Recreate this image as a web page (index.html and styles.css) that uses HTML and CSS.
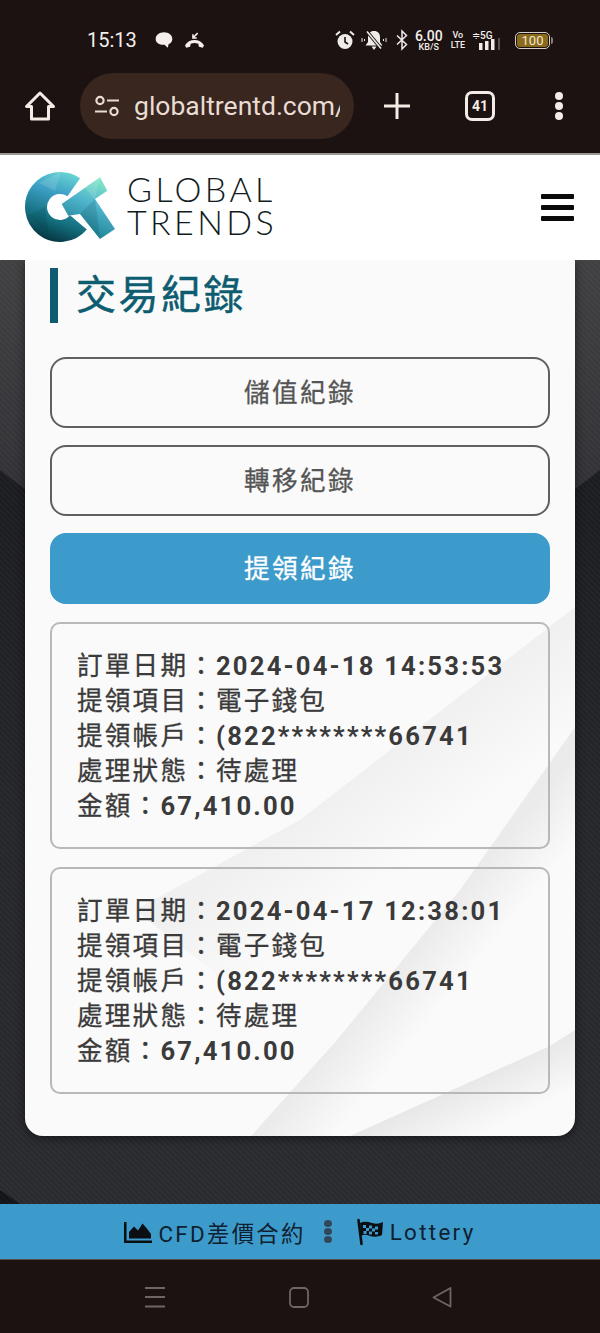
FILE: index.html
```html
<!DOCTYPE html>
<html lang="zh-Hant">
<head>
    <meta charset="UTF-8">
    <meta name="viewport" content="width=device-width, initial-scale=1.0">
    <title>交易紀錄</title>
    <link rel="stylesheet" href="styles.css">
</head>
<body>
<div class="phone">

    <!-- android status bar -->
    <div class="status-bar">
        <div class="status-left">
            <span class="clock">15:13</span>
            <svg width="20" height="20" viewBox="0 0 18 18"><path fill="#f4efec" d="M9 2c4.200 0 7.500 2.500 7.500 6 0 2.300-1.500 3.900-3.300 4.700l-.8 3.300-2.900-2.800C5 13.500 1.500 11.500 1.500 8c0-3.500 3.300-6 7.500-6z"/></svg>
            <svg width="21" height="19" viewBox="0 0 20 18"><path fill="#f4efec" d="M1 13.500c2-3.500 5.200-5 9-5s7 1.500 9 5l-1 2.300-3.800-.8-.6-3c-2.800-.8-4.400-.8-7.200 0l-.6 3-3.800.8z"/><path fill="none" stroke="#f4efec" stroke-width="1.500" d="M13 2L8.600 6.400M8.500 3v3.600h3.600"/></svg>
        </div>
        <div class="status-right">
            <svg width="22" height="22" viewBox="0 0 22 22"><circle cx="11" cy="12.500" r="7.500" fill="#f0ebe8"/><path d="M11 8v5l3 2" fill="none" stroke="#1c1211" stroke-width="1.600"/><path d="M2 6l4-3.500M20 6l-4-3.500" stroke="#f0ebe8" stroke-width="2"/></svg>
            <svg width="26" height="22" viewBox="0 0 26 22"><path fill="#f0ebe8" d="M13 2c4 0 6 2.500 6 6.500V13l2.500 3.500h-17L7 13V8.500C7 4.500 9 2 13 2zM10.500 17.500h5L13 21z"/><path d="M6 2.500l14 17" stroke="#1c1211" stroke-width="3.500"/><path d="M6 2.500l14 17" stroke="#f0ebe8" stroke-width="1.600"/><path d="M1 9v4M3.500 10v2M25 9v4M22.500 10v2" stroke="#f0ebe8"/></svg>
            <svg class="bt-icon" width="14" height="22" viewBox="0 0 14 22"><path fill="none" stroke="#f0ebe8" stroke-width="1.500" d="M2 6.500l9.500 9L7 20V2l4.500 4.500L2 15.500"/></svg>
            <div class="speed"><span class="speed-num">6.00</span><span class="speed-unit">KB/S</span></div>
            <div class="volte"><span>Vo</span><span>LTE</span></div>
            <div class="signal">
                <span class="net">≑5G</span>
                <svg width="32" height="12" viewBox="0 0 32 12"><path fill="#f0ebe8" d="M7 5h3.500v7H7zM13 3h3.500v9H13zM19 1h3.500v11H19z"/><path fill="#57504e" d="M26 0h2v12h-2z"/></svg>
            </div>
            <div class="battery"><span class="battery-level">100</span></div>
        </div>
    </div>

    <!-- browser toolbar -->
    <div class="toolbar">
        <svg width="32" height="32" viewBox="0 0 32 32"><path fill="none" stroke="#f4ece6" stroke-width="3" stroke-linejoin="round" d="M16 3L2.500 16.500H7.500V29h17V16.500h5z"/></svg>
        <div class="url-pill">
            <svg width="26" height="22" viewBox="0 0 26 22"><g fill="none" stroke="#e8dcd3" stroke-width="2.200"><circle cx="6" cy="5.500" r="3.600"/><circle cx="20" cy="16.500" r="3.600"/><path d="M13 5.500h12M1 16.500h12"/></g></svg>
            <span class="url-text">globaltrentd.com/</span>
        </div>
        <svg class="plus-icon" width="30" height="30" viewBox="0 0 30 30"><path d="M15 2v26M2 15h26" stroke="#f4ece6" stroke-width="3"/></svg>
        <div class="tab-count">41</div>
        <div class="menu-dots"><i></i><i></i><i></i></div>
    </div>

    <!-- site header -->
    <header class="site-header">
        <a class="logo">
            <svg width="92" height="74" viewBox="0 0 92 74">
                <defs>
                    <linearGradient id="logoG" gradientUnits="userSpaceOnUse" x1="50" y1="0" x2="25" y2="72">
                        <stop offset="0" stop-color="#6fdcd6"/>
                        <stop offset="0.350" stop-color="#3c9fc4"/>
                        <stop offset="0.700" stop-color="#14707f"/>
                        <stop offset="1" stop-color="#04303a"/>
                    </linearGradient>
                    <linearGradient id="logoT" gradientUnits="userSpaceOnUse" x1="80" y1="8" x2="55" y2="66">
                        <stop offset="0" stop-color="#86ecc6"/>
                        <stop offset="0.450" stop-color="#4fb4cc"/>
                        <stop offset="1" stop-color="#157a8a"/>
                    </linearGradient>
                </defs>
                <path fill="none" stroke="url(#logoG)" stroke-width="22" d="M48.800 16.300A24 24 0 1 0 53.400 51.400"/>
                <path fill="url(#logoT)" d="M36.700 33L75 6.300 82.300 19.700 70 28 90 58 75 68 55 43 43.300 44.700z"/>
                <path fill="#ffffff" opacity="0.120" d="M14 12L36 1 30 20zM60 17L75 6.300 70 28z"/>
                <path fill="#00303a" opacity="0.150" d="M4 44L20 36 24 64zM55 43L70 28 75 68z"/>
            </svg>
            <span class="logo-text">
                <span>GLOBAL</span>
                <span>TRENDS</span>
            </span>
        </a>
        <div class="hamburger"><i></i><i></i><i></i></div>
    </header>

    <main class="content">
        <svg class="page-bg" width="600" height="944" viewBox="0 0 600 944">
            <defs>
                <pattern id="weave" width="4" height="4" patternUnits="userSpaceOnUse" patternTransform="rotate(45)">
                    <rect width="4" height="1" fill="#ffffff" opacity="0.040"/>
                </pattern>
                <linearGradient id="bgTop" x1="0" y1="0" x2="0" y2="1">
                    <stop offset="0" stop-color="#414144"/>
                    <stop offset="0.500" stop-color="#333337"/>
                    <stop offset="1" stop-color="#2a2b2f"/>
                </linearGradient>
                <linearGradient id="bgBase" x1="0" y1="0" x2="0" y2="1">
                    <stop offset="0.200" stop-color="#1b1c1f"/>
                    <stop offset="0.600" stop-color="#26272b"/>
                    <stop offset="1" stop-color="#2a2b2f"/>
                </linearGradient>
            </defs>
            <rect width="600" height="944" fill="url(#bgBase)"/>
            <path fill="url(#bgTop)" d="M0 0H600V210L300 440 0 210z"/>
            <path fill="#131417" d="M0 930L20 944H0z"/>
            <rect width="600" height="944" fill="url(#weave)"/>
        </svg>

        <section class="card">
            <svg class="card-folds" width="550" height="876" viewBox="0 0 550 876">
                <defs>
                    <linearGradient id="foldUpper" gradientUnits="userSpaceOnUse" x1="360" y1="493" x2="420" y2="573">
                        <stop offset="0" stop-color="#f0f0f0"/>
                        <stop offset="1" stop-color="#f0f0f0" stop-opacity="0"/>
                    </linearGradient>
                    <linearGradient id="foldMid" gradientUnits="userSpaceOnUse" x1="400" y1="675" x2="445" y2="712">
                        <stop offset="0" stop-color="#ebebeb"/>
                        <stop offset="1" stop-color="#ebebeb" stop-opacity="0"/>
                    </linearGradient>
                    <linearGradient id="foldLow" gradientUnits="userSpaceOnUse" x1="440" y1="825" x2="462" y2="872">
                        <stop offset="0" stop-color="#e8e8e8"/>
                        <stop offset="1" stop-color="#e8e8e8" stop-opacity="0"/>
                    </linearGradient>
                </defs>
                <path fill="url(#foldUpper)" d="M110 650L275 560 550 347V600L300 800z"/>
                <path fill="url(#foldMid)" d="M226 876L312 780 435 630 550 467V876z"/>
                <path fill="url(#foldLow)" d="M325 876L525 786 550 770V876z"/>
            </svg>

            <h2 class="page-title">交易紀錄</h2>

            <div class="tabs">
                <a class="tab">儲值紀錄</a>
                <a class="tab">轉移紀錄</a>
                <a class="tab active">提領紀錄</a>
            </div>

            <div class="record">
                <div>訂單日期：<b>2024-04-18 14:53:53</b></div>
                <div>提領項目：電子錢包</div>
                <div>提領帳戶：<b>(822********66741</b></div>
                <div>處理狀態：待處理</div>
                <div>金額：<b>67,410.00</b></div>
            </div>

            <div class="record">
                <div>訂單日期：<b>2024-04-17 12:38:01</b></div>
                <div>提領項目：電子錢包</div>
                <div>提領帳戶：<b>(822********66741</b></div>
                <div>處理狀態：待處理</div>
                <div>金額：<b>67,410.00</b></div>
            </div>
        </section>
    </main>

    <!-- bottom links -->
    <div class="bottom-links">
        <a class="bottom-link">
            <svg width="28" height="24" viewBox="0 0 28 24"><path fill="#0b0f14" d="M0 2h2.500v18.500H28V23H0z"/><path fill="#0b0f14" d="M5 18.500V12l5-5.500 4 4 4.500-7 4 4.500 4.500 6v4.500z"/></svg>
            CFD差價合約
        </a>
        <div class="link-sep"><i></i><i></i><i></i></div>
        <a class="bottom-link">
            <svg width="28" height="28" viewBox="0 0 28 28"><path d="M2.500 2l3 24" stroke="#0b0f14" stroke-width="2.600" stroke-linecap="round"/><path fill="#0b0f14" d="M4 5c4-2 8-1 12 0 4 1 7 1 11-1l-1 13c-4 2-8 2-12 1-3-1-6-2-9 0z"/><path fill="#3d9bcb" d="M7 7h3v3H7zM13 7.500h3v3h-3zM19 8.500h3v3h-3zM10 10h3v3h-3zM16 10.500h3v3h-3zM7.500 13h3v3h-3zM13 13.500h3v3h-3zM19 14h3v2.500h-3z"/></svg>
            Lottery
        </a>
    </div>

    <!-- android nav bar -->
    <nav class="nav-bar">
        <svg width="22" height="22" viewBox="0 0 22 22"><path d="M1 2h20M1 11h20M1 20.500h20" stroke="#6f6663" stroke-width="1.800"/></svg>
        <svg width="20" height="22" viewBox="0 0 20 22"><rect x="1" y="2" width="18" height="19" rx="4" fill="none" stroke="#6f6663" stroke-width="1.800"/></svg>
        <svg width="20" height="22" viewBox="0 0 20 22"><path d="M18.500 2L1.500 11.500 18.500 20.500z" fill="none" stroke="#6f6663" stroke-width="1.800" stroke-linejoin="round"/></svg>
    </nav>

</div>
</body>
</html>
```

FILE: styles.css
```css
* {
    box-sizing: border-box;
}
body {
    margin: 0;
    font-family: Roboto, "Noto Sans CJK TC", sans-serif;
    background-color: #1c1211;
}
.phone {
    width: 600px;
    height: 1333px;
    display: flex;
    flex-direction: column;
    overflow: hidden;
}

/* status bar */
.status-bar {
    height: 72px;
    flex: none;
    display: flex;
    justify-content: space-between;
    align-items: center;
    padding: 8px 48px 0 87px;
    background-color: #1c1211;
    color: #f4efec;
}
.status-left {
    display: flex;
    align-items: center;
    gap: 10px;
}
.clock {
    font-size: 20px;
    margin-right: 7px;
}
.status-right {
    display: flex;
    align-items: center;
    gap: 5px;
}
.bt-icon {
    margin-left: 3px;
}
.speed {
    display: flex;
    flex-direction: column;
    align-items: center;
    margin-left: 1px;
    font-weight: 500;
    line-height: 1;
}
.speed-num {
    font-size: 14px;
}
.speed-unit {
    font-size: 9px;
}
.volte {
    display: flex;
    flex-direction: column;
    align-items: center;
    margin-left: 3px;
    font-size: 9px;
    font-weight: 500;
    line-height: 10px;
}
.signal {
    display: flex;
    flex-direction: column;
    align-items: flex-start;
    width: 32px;
    margin-left: 2px;
}
.net {
    font-size: 10px;
    line-height: 10px;
    font-weight: 500;
}
.signal svg {
    margin-top: -3px;
}
.battery {
    position: relative;
    width: 35px;
    height: 17px;
    margin: 0 2px 0 6px;
    padding: 1px;
    border: 1px solid #d8d0c8;
    border-radius: 5px;
}
.battery::after {
    content: "";
    position: absolute;
    right: -4px;
    top: 4px;
    width: 2px;
    height: 7px;
    border-radius: 0 2px 2px 0;
    background-color: #8a8078;
}
.battery-level {
    display: block;
    height: 100%;
    border-radius: 3px;
    background-color: #8a6a1c;
    color: #f2e9d0;
    font-size: 13px;
    line-height: 13px;
    text-align: center;
}

/* browser toolbar */
.toolbar {
    height: 83px;
    flex: none;
    display: flex;
    align-items: center;
    background-color: #1c1211;
    border-bottom: 2px solid #9a9694;
    padding: 0 0 14px 24px;
}
.url-pill {
    width: 274px;
    height: 66px;
    margin-left: 24px;
    padding-left: 14px;
    display: flex;
    align-items: center;
    gap: 14px;
    border-radius: 33px;
    background-color: #38261f;
    overflow: hidden;
}
.url-text {
    width: 206px;
    flex: none;
    font-size: 26.500px;
    color: #e8dcd3;
    white-space: nowrap;
    overflow: hidden;
}
.plus-icon {
    margin-left: 28px;
}
.tab-count {
    width: 30px;
    height: 30px;
    margin-left: 53px;
    border: 3px solid #f4ece6;
    border-radius: 7px;
    color: #f4ece6;
    font-size: 14px;
    font-weight: 700;
    line-height: 24px;
    text-align: center;
}
.menu-dots {
    margin-left: 60px;
    display: flex;
    flex-direction: column;
    gap: 2px;
}
.menu-dots i {
    display: block;
    width: 8px;
    height: 8px;
    border-radius: 50%;
    background-color: #f4ece6;
}

/* site header */
.site-header {
    position: relative;
    z-index: 1;
    height: 105px;
    flex: none;
    display: flex;
    justify-content: space-between;
    align-items: center;
    padding: 0 26px 0 25px;
    background-color: white;
}
.logo {
    display: flex;
    align-items: center;
    gap: 10px;
}
.logo-text {
    display: flex;
    flex-direction: column;
    padding-bottom: 6px;
    font-family: Lato, sans-serif;
    font-size: 34px;
    font-weight: 300;
    line-height: 33px;
    letter-spacing: 3.400px;
    color: #101a20;
}
.hamburger {
    display: flex;
    flex-direction: column;
    gap: 6px;
}
.hamburger i {
    display: block;
    width: 33px;
    height: 5px;
    border-radius: 1px;
    background-color: #0a0a0a;
}

/* dark page background */
.content {
    position: relative;
    height: 944px;
    flex: none;
    padding: 0 25px;
    background-color: #26272b;
}
.page-bg {
    position: absolute;
    left: 0;
    top: 0;
}
.card {
    position: relative;
    height: 876px;
    padding: 8px 25px 0;
    overflow: hidden;
    background-color: #fafafa;
    border-radius: 0 0 18px 18px;
    box-shadow: 0 2px 10px rgba(0, 0, 0, 0.500);
}
.card-folds {
    position: absolute;
    left: 0;
    top: 0;
}
.page-title {
    position: relative;
    margin: 0 0 34px;
    height: 55px;
    padding-left: 18px;
    border-left: 8px solid #0e5c70;
    color: #0e5c70;
    font-size: 40px;
    font-weight: 400;
    line-height: 55px;
    letter-spacing: 2.500px;
    -webkit-text-stroke: 0.500px #0e5c70;
}
.tabs {
    position: relative;
    display: flex;
    flex-direction: column;
    gap: 17px;
    margin-bottom: 18px;
}
.tab {
    height: 71px;
    padding-bottom: 4px;
    display: flex;
    justify-content: center;
    align-items: center;
    border: 2px solid #606060;
    border-radius: 16px;
    color: #555555;
    font-size: 25.600px;
    letter-spacing: 2.400px;
    font-weight: 400;
    -webkit-text-stroke: 0.300px currentColor;
}
.tab.active {
    border-color: #3d9bcb;
    background-color: #3d9bcb;
    color: white;
}
.record {
    position: relative;
    height: 227px;
    margin-bottom: 18px;
    padding: 25px;
    border: 2px solid #b8b8b8;
    border-radius: 10px;
    color: #3a3a3a;
    font-size: 25.600px;
    line-height: 35px;
    letter-spacing: 2.200px;
    font-weight: 400;
    white-space: nowrap;
    -webkit-text-stroke: 0.300px currentColor;
}
.record b {
    font-weight: 700;
    -webkit-text-stroke: 0;
}

/* bottom links */
.bottom-links {
    height: 56px;
    flex: none;
    display: flex;
    justify-content: center;
    align-items: center;
    background-color: #3d9bcb;
    border-bottom: 1px solid #5a4c48;
    color: #0f2030;
    font-size: 22.400px;
    letter-spacing: 2.300px;
}
.bottom-link {
    display: flex;
    align-items: center;
    gap: 6px;
}
.link-sep {
    display: flex;
    flex-direction: column;
    gap: 1px;
    margin: 0 24px 0 18px;
}
.link-sep i {
    display: block;
    width: 8px;
    height: 7px;
    border-radius: 50%;
    background-color: #33475a;
}

/* nav bar */
.nav-bar {
    flex: 1;
    display: flex;
    justify-content: center;
    align-items: center;
    gap: 123px;
    padding-right: 5px;
    background-color: #1c1211;
}
```
